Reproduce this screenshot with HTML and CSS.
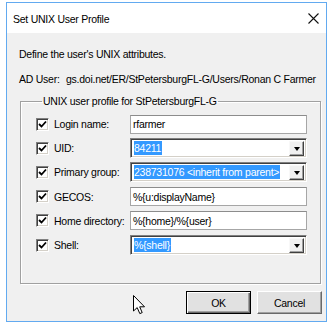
FILE: index.html
```html
<!DOCTYPE html>
<html>
<head>
<meta charset="utf-8">
<link rel="stylesheet" href="styles.css">
</head>
<body>
<div class="window">
  <div class="titlebar">
    <span class="title">Set UNIX User Profile</span>
    <svg class="close" width="11" height="11" viewBox="0 0 11 11"><path d="M0.5 0.5 L10.5 10.5 M10.5 0.5 L0.5 10.5" stroke="#111" stroke-width="1.1" fill="none"/></svg>
  </div>
  <div class="content">
    <p class="intro">Define the user's UNIX attributes.</p>
    <div class="aduser"><span class="adlabel">AD User:</span><span>gs.doi.net/ER/StPetersburgFL-G/Users/Ronan C Farmer</span></div>
    <fieldset class="group">
      <legend>UNIX user profile for StPetersburgFL-G</legend>
      <div class="row">
        <span class="check"><svg width="9" height="9" viewBox="0 0 9 9"><path d="M1 4 L3.5 6.5 L8 1.5" stroke="#000" stroke-width="1.8" fill="none"/></svg></span>
        <span class="label">Login name:</span>
        <span class="field edit">rfarmer</span>
      </div>
      <div class="row">
        <span class="check"><svg width="9" height="9" viewBox="0 0 9 9"><path d="M1 4 L3.5 6.5 L8 1.5" stroke="#000" stroke-width="1.8" fill="none"/></svg></span>
        <span class="label">UID:</span>
        <span class="field combo"><span class="val"><span class="sel">84211</span></span><span class="drop"><i></i></span></span>
      </div>
      <div class="row">
        <span class="check"><svg width="9" height="9" viewBox="0 0 9 9"><path d="M1 4 L3.5 6.5 L8 1.5" stroke="#000" stroke-width="1.8" fill="none"/></svg></span>
        <span class="label">Primary group:</span>
        <span class="field combo"><span class="val"><span class="sel">238731076 &lt;inherit from parent&gt;</span></span><span class="drop"><i></i></span></span>
      </div>
      <div class="row">
        <span class="check"><svg width="9" height="9" viewBox="0 0 9 9"><path d="M1 4 L3.5 6.5 L8 1.5" stroke="#000" stroke-width="1.8" fill="none"/></svg></span>
        <span class="label">GECOS:</span>
        <span class="field edit">%{u:displayName}</span>
      </div>
      <div class="row">
        <span class="check"><svg width="9" height="9" viewBox="0 0 9 9"><path d="M1 4 L3.5 6.5 L8 1.5" stroke="#000" stroke-width="1.8" fill="none"/></svg></span>
        <span class="label">Home directory:</span>
        <span class="field edit">%{home}/%{user}</span>
      </div>
      <div class="row">
        <span class="check"><svg width="9" height="9" viewBox="0 0 9 9"><path d="M1 4 L3.5 6.5 L8 1.5" stroke="#000" stroke-width="1.8" fill="none"/></svg></span>
        <span class="label">Shell:</span>
        <span class="field combo"><span class="val"><span class="sel">%{shell}</span></span><span class="drop"><i></i></span></span>
      </div>
    </fieldset>
    <div class="buttons">
      <span class="btn default">OK</span>
      <span class="btn">Cancel</span>
    </div>
  </div>
  <svg class="cursor" width="13" height="20" viewBox="0 0 13 20"><path d="M0.5 0.5 L0.5 16 L4.2 12.6 L6.8 18.6 L9.2 17.6 L6.7 11.8 L11.5 11.8 Z" fill="#fff" stroke="#000" stroke-width="1" stroke-linejoin="miter"/></svg>
</div>
</body>
</html>
```

FILE: styles.css
```css
* { box-sizing: border-box; }
html, body { margin: 0; padding: 0; background: #fff; }
body {
  font-family: "Liberation Sans", Arial, sans-serif;
  font-size: 10.5px;
  letter-spacing: -0.25px;
  color: #000;
  white-space: nowrap;
}
.window {
  position: relative;
  margin: 2px 0 0 6px;
  width: 321px;
  height: 320px;
  border: 1px solid #62aaf0;
  background: #f0f0f0;
  display: flex;
  flex-direction: column;
}
.titlebar {
  height: 30px;
  flex: none;
  background: #fff;
  display: flex;
  align-items: center;
  justify-content: space-between;
  padding: 0 4px 0 6px;
}
.title { line-height: 14px; margin-top: 1px; }
.close { margin-right: 3px; margin-top: 1px; }
.content {
  flex: 1;
  padding: 14px 0 0 12px;
  display: flex;
  flex-direction: column;
}
.intro { margin: 0; line-height: 14px; }
.aduser { margin-top: 11px; line-height: 14px; display: flex; }
.adlabel { width: 47px; }
.group {
  margin: 8px 5px 0 1px;
  padding: 4px 0 0 15px;
  height: 190px;
  flex: none;
  border: 1px solid #a0a0a0;
  box-shadow: inset 1px 1px 0 #fff, 1px 1px 0 #fff;
}
.group legend {
  padding: 0 1px;
  margin-left: 6px;
  line-height: 14px;
}
.row {
  height: 24.2px;
  display: flex;
  align-items: center;
}
.check {
  width: 13px;
  height: 13px;
  border: 1px solid;
  border-color: #808080 #fff #fff #808080;
  box-shadow: inset 1px 1px 0 #404040, inset -1px -1px 0 #d4d0c8;
  background: #fff;
  display: flex;
  align-items: center;
  justify-content: center;
}
.label { margin-left: 5px; width: 76px; line-height: 14px; }
.field {
  width: 177px;
  height: 19px;
  background: #fff;
  display: flex;
  align-items: center;
  line-height: 14px;
}
.edit {
  border: 1px solid #a6a6a6;
  border-top-color: #8c8c8c;
  padding-left: 2px;
}
.combo {
  height: 20px;
  border: 1px solid;
  border-color: #808080 #fff #fff #808080;
  box-shadow: inset 1px 1px 0 #404040, inset -1px -1px 0 #d4d0c8;
  padding: 2px 2px 2px 3px;
}
.val { flex: 1; display: flex; align-items: center; }
.sel { background: #3399ff; color: #fff; padding: 0 1px 0 0; line-height: 14px; }
.drop {
  width: 15px;
  height: 15px;
  background: #f0f0f0;
  border: 1px solid;
  border-color: #f8f8f8 #404040 #404040 #f8f8f8;
  box-shadow: inset -1px -1px 0 #a0a0a0;
  display: flex;
  align-items: center;
  justify-content: center;
}
.drop i {
  display: block;
  width: 0; height: 0;
  border-left: 3.5px solid transparent;
  border-right: 3.5px solid transparent;
  border-top: 4px solid #000;
  margin-top: 1px;
}
.buttons {
  display: flex;
  justify-content: flex-end;
  gap: 6px;
  margin-top: 7px;
  padding-right: 4px;
}
.btn {
  width: 65px;
  height: 23px;
  display: flex;
  align-items: center;
  justify-content: center;
  background: #e1e1e1;
  border: 1px solid;
  border-color: #fff #696969 #696969 #fff;
  box-shadow: inset -1px -1px 0 #a0a0a0;
  line-height: 14px;
}
.btn.default {
  border: 1px solid #000;
  box-shadow: inset 1px 1px 0 #fff, inset -1px -1px 0 #696969, inset -2px -2px 0 #a0a0a0;
}
.cursor { position: absolute; left: 126px; top: 292px; }
```
